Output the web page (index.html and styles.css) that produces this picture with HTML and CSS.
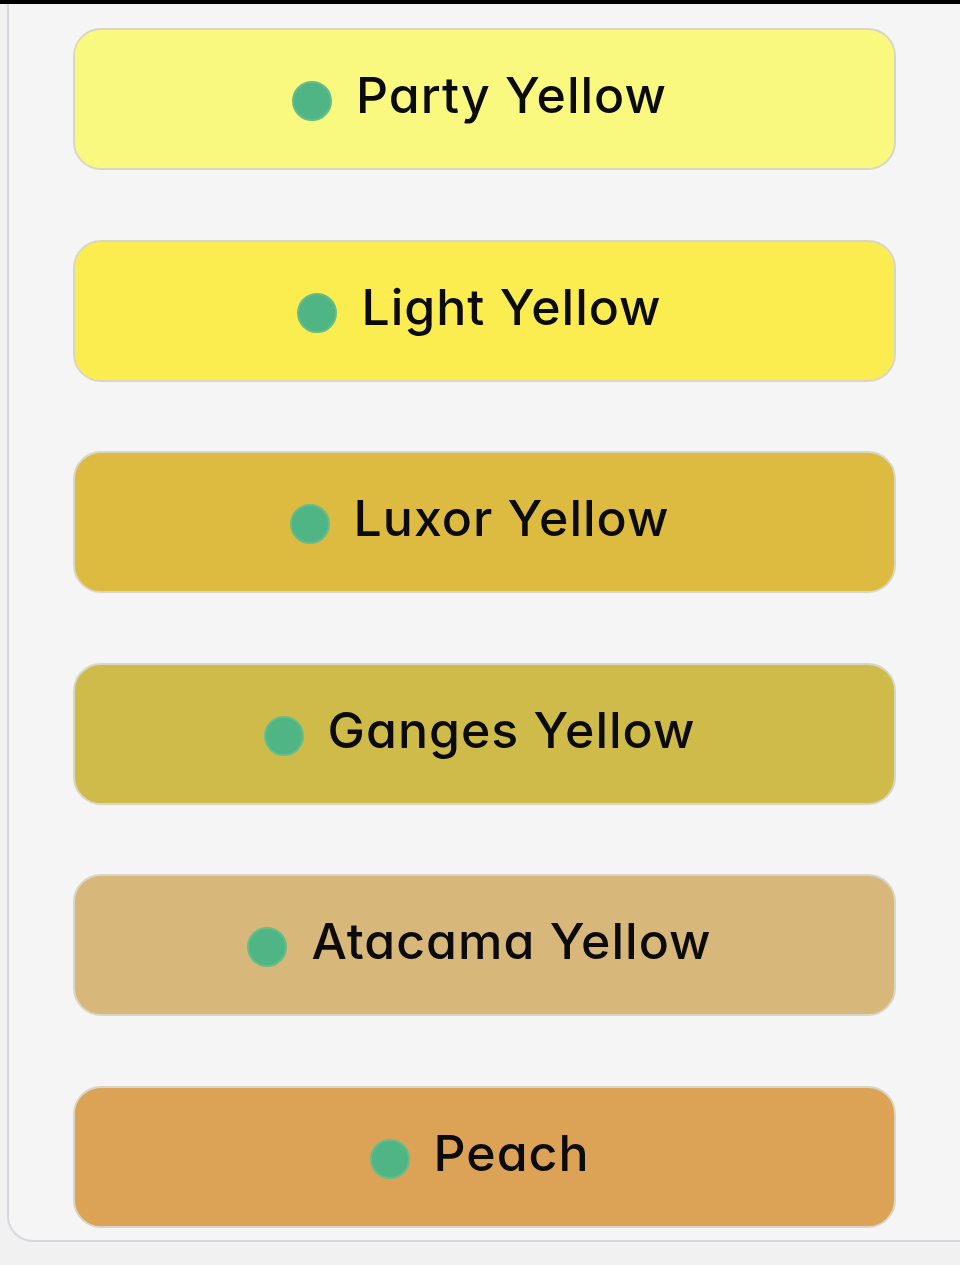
FILE: index.html
```html
<!DOCTYPE html>
<html>
    <head>
        <meta charset="UTF-8">
        <meta name="viewport" content="width=device-width, initial-scale=1">
        <link rel="stylesheet" href="styles.css">
    </head>
    <body>
        <div class="topbar"></div>
        <div class="panel">
            <ul class="colors">
                <li class="color party"><span class="dot"></span><span class="name">Party Yellow</span></li>
                <li class="color light"><span class="dot"></span><span class="name">Light Yellow</span></li>
                <li class="color luxor"><span class="dot"></span><span class="name">Luxor Yellow</span></li>
                <li class="color ganges"><span class="dot"></span><span class="name">Ganges Yellow</span></li>
                <li class="color atacama"><span class="dot"></span><span class="name">Atacama Yellow</span></li>
                <li class="color peach"><span class="dot"></span><span class="name">Peach</span></li>
            </ul>
        </div>
    </body>
</html>
```

FILE: styles.css
```css
* {
    box-sizing: border-box;
}

body {
    margin: 0;
    background: #f1f1f2;
    font-family: Inter, "Noto Sans", sans-serif;
    overflow: hidden;
}

.topbar {
    height: 4px;
    background: #000;
}

/* Panel that holds the list, only its left and bottom edges are visible */
.panel {
    margin-left: 7px;
    margin-right: -40px;
    padding: 24px 0 12px 64px;
    background: #f5f5f6;
    border-left: 2px solid #d5d9de;
    border-bottom: 2px solid #d5d9de;
    border-bottom-left-radius: 26px;
}

ul {
    margin: 0;
    padding: 0;
}

.colors {
    display: flex;
    flex-direction: column;
    gap: 69.6px;
}

.color {
    list-style-type: none;
    width: 823px;
    height: 142px;
    display: flex;
    align-items: center;
    justify-content: center;
    gap: 24px;
    padding-right: 10px;
    border: 2px solid #d9d6c8;
    border-radius: 28px;
}

.dot {
    width: 40px;
    height: 40px;
    border-radius: 50%;
    background: #4fb585;
    border: 2px solid #66bd8a;
    margin-top: 4px;
}

.name {
    font-size: 50px;
    font-weight: 500;
    letter-spacing: 1px;
    color: #0b0b0b;
    margin-bottom: 8px;
    font-feature-settings: "cv11";
}

.party { background: #f8f97e; }
.light { background: #fbec4f; }
.luxor { background: #dcbb40; }
.ganges { background: #cfbb4a; }
.atacama { background: #d8b77b; }
.peach { background: #dca357; }
```
